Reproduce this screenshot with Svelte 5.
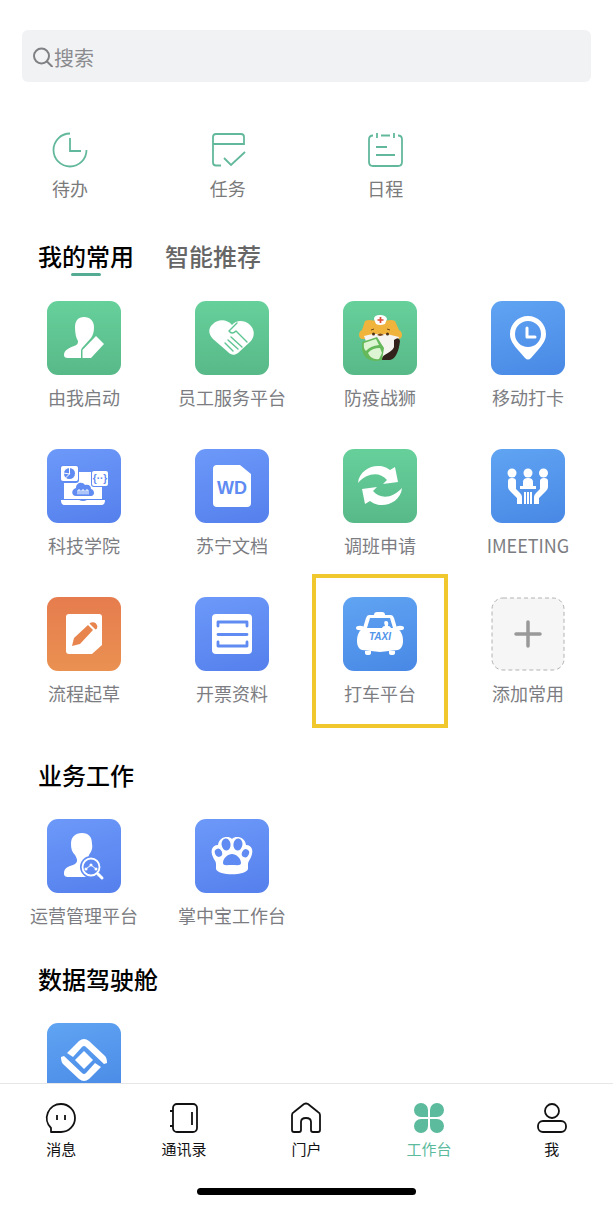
<script lang="ts">
	type App = { name: string, icon: string, color: string, marked?: boolean }

	const shortcuts = [
		{name: '待办', icon: 'todo'},
		{name: '任务', icon: 'task'},
		{name: '日程', icon: 'schedule'},
	]

	const tabs = ['我的常用', '智能推荐']
	let tab = $state(tabs[0])

	const common: App[] = [
		{name: '由我启动', icon: 'start', color: 'green'},
		{name: '员工服务平台', icon: 'heart', color: 'green'},
		{name: '防疫战狮', icon: 'lion', color: 'green'},
		{name: '移动打卡', icon: 'pin', color: 'blue'},
		{name: '科技学院', icon: 'laptop', color: 'indigo'},
		{name: '苏宁文档', icon: 'doc', color: 'indigo'},
		{name: '调班申请', icon: 'swap', color: 'green'},
		{name: 'IMEETING', icon: 'meeting', color: 'blue'},
		{name: '流程起草', icon: 'draft', color: 'orange'},
		{name: '开票资料', icon: 'invoice', color: 'indigo'},
		{name: '打车平台', icon: 'taxi', color: 'blue', marked: true},
		{name: '添加常用', icon: 'add', color: 'empty'},
	]

	const business: App[] = [
		{name: '运营管理平台', icon: 'operate', color: 'indigo'},
		{name: '掌中宝工作台', icon: 'paw', color: 'indigo'},
	]

	const cockpit: App[] = [
		{name: '', icon: 'diamond', color: 'blue'},
	]

	const pages = [
		{name: '消息', icon: 'message'},
		{name: '通讯录', icon: 'contacts'},
		{name: '门户', icon: 'home'},
		{name: '工作台', icon: 'work'},
		{name: '我', icon: 'me'},
	]
	let page = $state('工作台')
</script>

{#snippet glyph(icon: string)}
	<svg class="glyph" viewBox="0 0 74 74" fill="#fff" aria-hidden="true">
		{#if icon === 'start'}
			<path d="M28 26c0-6 3-10 9-10s10 4 10 10c0 5-1 8-3 11l-9 10-1 2v8H21c-3 0-4-1-4-3 0-5 5-7 10-9 3-1 4-2 4-5-2-3-3-8-3-14z"/>
			<path d="M49 35l8 8-13 14h-8.500v-8z"/>
		{:else if icon === 'heart'}
			<path d="M37 24c4-5 12-5 17-1 6 5 6 12 2 17L43 52c-4 3-7 2-10-1L18 38c-5-5-5-11 0-15 5-5 14-5 19 1z"/>
			<path class="cut" d="M42 22l-8 8q3 4 7 0l11 11M36 36l11 10M33 39l10 9M30 42l8 8" stroke-width="1.400"/>
		{:else if icon === 'lion'}
			<path d="M22 20c4-2 8 0 15 0s11-2 15 0l4 9c4 2 4 8 0 9H19c-4-1-4-7 0-9z" fill="#f0b43c"/>
			<path d="M21 35q16-5 35 1l-4 14-10 9-13-2z" fill="#f6f4f1"/>
			<path d="M51 39q5-4 6 1c-1 9-4 18-10 19h-9c2-7 11-7 13-13z" fill="#33211c"/>
			<circle cx="30.500" cy="33" r="1.500" fill="#4c3118"/>
			<circle cx="44.500" cy="33" r="1.500" fill="#4c3118"/>
			<path d="M28 29l3-1M44 28l3 1" stroke="#6d4717" stroke-width="1"/>
			<path d="M34 34q3-3 7 0l-4 1z" fill="#7b4519"/>
			<path d="M31 18q0-4 6-4t7 4l-2 5q-5 2-9 0z" fill="#fff"/>
			<path d="M37.500 16v6M34.500 19h6" stroke="#db4b3a" stroke-width="1.700"/>
			<path d="M19 41l15-5 7 11-2 12q-17 4-20-10z" fill="#65b95a"/>
			<path d="M21 42l12-4 3 6q-9 1-13 6-3-3-2-8zM25 52q4-5 12-5l2 5-3 6q-8 1-11-6z" fill="#def5d3"/>
		{:else if icon === 'pin'}
			<path fill-rule="evenodd" d="M37 15c10 0 18 8 18 18 0 7-4 11-8 16l-7 8q-3 3-6 0l-7-8c-4-5-8-9-8-16 0-10 8-18 18-18zm0 5a13 13 0 1 0 0 26 13 13 0 0 0 0-26z"/>
			<path class="line" d="M36 27v9h8" stroke-width="3"/>
		{:else if icon === 'laptop'}
			<path d="M17 23h38v27H17zM14 51h18q4 2 8 0h18c0 3-1 5-4 5H18c-3 0-4-2-4-5z"/>
			<rect class="cut" x="14" y="17" width="17" height="16" rx="2" stroke-width="2"/>
			<rect class="cut" x="45" y="22" width="16" height="15" rx="2" stroke-width="2"/>
			<rect x="14" y="17" width="17" height="15" rx="2"/>
			<rect x="45" y="22" width="16" height="15" rx="2"/>
			<g class="hole">
				<circle cx="22.500" cy="24.500" r="5.500"/>
				<path d="M29 47c-5 0-5-7 0-8 0-5 6-7 9-3 4-1 6 1 6 4 4 1 4 7 0 7z"/>
				<text x="53" y="32.500" font-size="10" font-weight="700" text-anchor="middle">{'{··}'}</text>
			</g>
			<path class="line" d="M22.500 19v6l-6-1M22.500 25l-4 4" stroke-width="1"/>
			<path class="line" d="M31 45v-4h2v4M35 45v-4h2v4M39 45v-4h2v4" stroke-width="1"/>
		{:else if icon === 'doc'}
			<path d="M22 16h23l11 9v29q0 4-4 4H22q-4 0-4-4V20q0-4 4-4z"/>
			<text class="hole" x="37" y="45" font-size="18" font-weight="700" text-anchor="middle">WD</text>
		{:else if icon === 'swap'}
			<path d="M15 34c1-11 11-17 20-17 6 0 9 2 12 4l5-3 3 15-15 2 4-4c-7-8-19-8-29 3z"/>
			<path transform="rotate(180 37 36.500)" d="M15 34c1-11 11-17 20-17 6 0 9 2 12 4l5-3 3 15-15 2 4-4c-7-8-19-8-29 3z"/>
		{:else if icon === 'meeting'}
			<circle cx="21" cy="24" r="4.500"/>
			<circle cx="37" cy="24" r="4.500"/>
			<circle cx="52.500" cy="24" r="4.500"/>
			<path d="M17 32q0-3 4-3t4 3v8l4 4q2 2 2 4v7h-5v-6l-7-7q-2-2-2-4zM57 32q0-3-4-3t-4 3v8l-4 4q-2 2-2 4v7h5v-6l7-7q2-2 2-4z"/>
			<path d="M32 37v-4q0-4 5-4t5 4v4h3v3H29v-3zM33 43h2v12h-2zM36 43h2v12h-2zM39 43h2v12h-2z"/>
		{:else if icon === 'draft'}
			<path d="M22 17h30q3 0 3 3v28l-10 9H22q-3 0-3-3V20q0-3 3-3z"/>
			<path class="hole" d="M25 49l2-8 14-13 5 5-13 14zM42.500 26.500l1.500-1q3-1 5 1t1 5l-1.500 1z"/>
		{:else if icon === 'invoice'}
			<rect x="17" y="17" width="40" height="40" rx="4"/>
			<path class="cut" d="M23 29v-4h29v4M23 37.500h29M23 45v4h29v-4" stroke-width="2.800"/>
		{:else if icon === 'taxi'}
			<path fill-rule="evenodd" d="M31 18q0-3 3-3h5q3 0 3 3h6q2 0 3 3l3 10c4 3 6 7 6 13 0 5-2 8-5 9l-18 2-18-2c-3-1-5-4-5-9 0-6 2-10 6-13l3-10q1-3 3-3zM27 21l-3 10h26l-3-10z"/>
			<ellipse cx="17" cy="31" rx="4" ry="2.200"/>
			<ellipse cx="57" cy="31" rx="4" ry="2.200"/>
			<path d="M22 54h6v2q0 2-3 2t-3-2zM46 54h6v2q0 2-3 2t-3-2zM39 32q0-3 3-3-2-5 1-5t2 5q3 0 3 3z"/>
			<text class="hole" x="37" y="43" font-size="10" font-weight="700" font-style="italic" text-anchor="middle">TAXI</text>
		{:else if icon === 'add'}
			<rect x="1" y="1" width="72" height="72" rx="11" fill="#f6f6f6" stroke="#b2b2b2" stroke-dasharray="4 3"/>
			<path d="M37 25v24M25 37h24" stroke="#999" stroke-width="3.500" stroke-linecap="round"/>
		{:else if icon === 'operate'}
			<path d="M24 25c0-7 4-11 11-11s10 4 10 11c1 5-1 8-3 11-2 6 0 8 4 9l6 12-14 1H22c-4 0-5-1-5-4 0-5 5-7 9-8 5-2 5-5 2-10-3-3-4-6-4-11z"/>
			<circle class="hole" cx="44" cy="48" r="11"/>
			<circle class="line" cx="44" cy="48" r="8.500" stroke-width="1.800"/>
			<path class="line" d="M39 50l5-4 5 4" stroke-width="1"/>
			<path class="line" d="M51 55l4 4" stroke-width="3"/>
			<circle cx="39" cy="50" r="1.500"/>
			<circle cx="44" cy="46" r="1.500"/>
			<circle cx="49" cy="50" r="1.500"/>
		{:else if icon === 'paw'}
			<path d="M23 26c1-8 10-10 14-6 4-4 13-2 14 6 6 0 8 6 5 12-1 3-3 4-3 8v4c-2 7-30 7-32 0v-5c0-3-2-4-3-7-3-6-1-12 5-12z"/>
			<g class="hole">
				<ellipse cx="31" cy="25.500" rx="4.500" ry="6" transform="rotate(-8 31 25)"/>
				<ellipse cx="43" cy="25.500" rx="4.500" ry="6" transform="rotate(8 43 25)"/>
				<ellipse cx="23.500" cy="34" rx="3.500" ry="4.200" transform="rotate(-25 23 34)"/>
				<ellipse cx="50.500" cy="34" rx="3.500" ry="4.200" transform="rotate(25 50 34)"/>
				<path d="M28 44c0-5 5-9 9-9s9 4 9 9c0 3-4 2-9 2s-9 1-9-2z"/>
			</g>
		{:else if icon === 'diamond'}
			<path d="M20 30l12-12q5-4 10 0l16 15q2 2 2 7l-3 1-18-17q-2-2-4 0L26 34z"/>
			<path transform="rotate(180 37 37)" d="M20 30l12-12q5-4 10 0l16 15q2 2 2 7l-3 1-18-17q-2-2-4 0L26 34z"/>
			<path d="M37 28l9 9-9 9-9-9z"/>
		{/if}
	</svg>
{/snippet}

{#snippet grid(apps: App[])}
	<div class="grid">
		{#each apps as app}
			<button class="app" class:marked={app.marked}>
				<span class="tile {app.color}">{@render glyph(app.icon)}</span>
				{#if app.name}<span class="name">{app.name}</span>{/if}
			</button>
		{/each}
	</div>
{/snippet}

<div class="screen">
	<main>
		<label class="search">
			<svg width="20" height="20" viewBox="0 0 20 20" fill="none" stroke="#808184" stroke-width="2" stroke-linecap="round" aria-hidden="true">
				<circle cx="8.500" cy="9" r="7.500"/>
				<path d="M14 14.500l5 5"/>
			</svg>
			<input type="search" placeholder="搜索">
		</label>

		<div class="shortcuts">
			{#each shortcuts as item}
				<button class="shortcut">
					<svg width="36" height="36" viewBox="0 0 36 36" fill="none" stroke="#62b89c" stroke-width="1.800" aria-hidden="true">
						{#if item.icon === 'todo'}
							<path d="M18 1.500A16.500 16.500 0 1 0 34.500 18"/>
							<path d="M18 6v13h11"/>
						{:else if item.icon === 'task'}
							<path d="M11 33.500H6q-3 0-3-3V5q0-3 3-3h25q3 0 3 3v8M3 12h31"/>
							<path d="M14 26l7 7 14-13"/>
						{:else}
							<path d="M6 3.500q-4 0-4 4V30q0 4 4 4h25q4 0 4-4V7.500q0-4-4-4M14 3.500h9"/>
							<path d="M10 1v5M27 1v5M9 15h11M9 23h19"/>
						{/if}
					</svg>
					<span>{item.name}</span>
				</button>
			{/each}
		</div>

		<div class="tabs">
			{#each tabs as name}
				<button class="tab" class:active={tab === name} onclick={() => tab = name}>{name}</button>
			{/each}
		</div>
		{@render grid(common)}

		<h2>业务工作</h2>
		{@render grid(business)}

		<h2>数据驾驶舱</h2>
		{@render grid(cockpit)}
	</main>

	<footer>
		<nav>
			{#each pages as item}
				<a href="#{item.icon}" class:current={page === item.name} onclick={() => page = item.name}>
					<svg width="32" height="32" viewBox="0 0 32 32" fill="none" stroke="currentColor" stroke-width="1.800" stroke-linejoin="round" aria-hidden="true">
						{#if item.icon === 'message'}
							<path d="M16 2a14 14 0 0 1 0 28H6v-4A14 14 0 0 1 16 2z"/>
							<path d="M12 13v5M20 13v5"/>
						{:else if item.icon === 'contacts'}
							<rect x="5" y="2" width="24" height="28" rx="4"/>
							<path d="M24 10v13M2 9h3M2 24h3"/>
						{:else if item.icon === 'home'}
							<path d="M2 13q0-2 2-3l10-8q2-1 4 0l10 8q2 1 2 3v15q0 2-2 2h-5q-2 0-2-2v-8q0-4-5-4t-5 4v8q0 2-2 2H4q-2 0-2-2z"/>
						{:else if item.icon === 'work'}
							<path fill="currentColor" stroke="none" d="M15 15H8a7 7 0 1 1 7-7zM17 15V8a7 7 0 1 1 7 7zM15 17v7a7 7 0 1 1-7-7zM17 17h7a7 7 0 1 1-7 7z"/>
						{:else}
							<circle cx="16" cy="9" r="7"/>
							<rect x="2" y="19" width="28" height="11" rx="5"/>
						{/if}
					</svg>
					<span>{item.name}</span>
				</a>
			{/each}
		</nav>
		<div class="indicator"></div>
	</footer>
</div>

<style>
	:global(body) {
		background: #fff;
	}

	.screen {
		display: flex;
		flex-direction: column;
		height: 100vh;
		font-family: "Noto Sans CJK SC", sans-serif;
		color: #000;
	}

	button {
		padding: 0;
		border: 0;
		background: none;
		font-family: inherit;
		color: inherit;
		cursor: pointer;
	}

	svg {
		display: block;
	}

	main {
		flex: 1;
		min-height: 0;
		overflow-y: auto;
		scrollbar-width: none;
	}

	.search {
		display: flex;
		align-items: center;
		gap: 1px;
		height: 52px;
		margin: 30px 22px 0;
		padding: 2px 11px 0;
		box-sizing: border-box;
		border-radius: 6px;
		background: #f1f2f4;
	}

	.search input {
		flex: 1;
		min-width: 0;
		height: 32px;
		padding: 0;
		border: 0;
		outline: none;
		background: none;
		font-family: inherit;
		font-size: 20px;
	}

	.search input::placeholder {
		color: #8a8b8e;
	}

	.shortcuts {
		display: grid;
		grid-template-columns: repeat(4, 72px);
		justify-content: space-between;
		margin-top: 50px;
		padding: 0 34px;
	}

	.shortcut {
		display: flex;
		flex-direction: column;
		align-items: center;
		gap: 8px;
		font-size: 18px;
		line-height: 24px;
		color: #7a7a7a;
	}

	.tabs {
		display: flex;
		gap: 31px;
		margin: 40px 38px 29px;
	}

	.tab {
		position: relative;
		font-size: 24px;
		line-height: 32px;
		font-weight: 500;
		color: #666;
	}

	.tab.active {
		color: #000;
	}

	.tab.active::after {
		content: "";
		position: absolute;
		bottom: -4px;
		left: 50%;
		width: 30px;
		height: 3px;
		margin-left: -15px;
		border-radius: 2px;
		background: #52ab92;
	}

	.grid {
		display: grid;
		grid-template-columns: repeat(4, 1fr);
		row-gap: 40px;
		padding: 0 11px 0 10px;
	}

	.app {
		position: relative;
		display: flex;
		flex-direction: column;
		align-items: center;
		gap: 10px;
	}

	.marked::after {
		content: "";
		position: absolute;
		inset: -23px 6px;
		border: 4px solid #f0c82d;
	}

	.name {
		font-size: 18px;
		line-height: 24px;
		white-space: nowrap;
		color: #7c7d82;
	}

	.tile {
		width: 74px;
		height: 74px;
		border-radius: 11px;
	}

	.green {
		--tone: #5ec492;
		background: linear-gradient(#66d09b, #58b988);
	}

	.blue {
		--tone: #5294ea;
		background: linear-gradient(165deg, #60a4f3, #4888e5);
	}

	.indigo {
		--tone: #5f8bf2;
		background: linear-gradient(165deg, #6c99f9, #5580ed);
	}

	.orange {
		--tone: #e8854f;
		background: linear-gradient(#e67c4e, #ea9152);
	}

	.glyph {
		width: 100%;
		height: 100%;
		font-family: "Liberation Sans", "Noto Sans CJK SC", sans-serif;
	}

	.hole {
		fill: var(--tone);
	}

	.cut {
		fill: none;
		stroke: var(--tone);
		stroke-linecap: round;
		stroke-linejoin: round;
	}

	.line {
		fill: none;
		stroke: #fff;
		stroke-linecap: round;
		stroke-linejoin: round;
	}

	h2 {
		margin: 54px 38px 28px;
		font-size: 24px;
		line-height: 32px;
		font-weight: 500;
	}

	.grid + h2 ~ h2 {
		margin-top: 36px;
	}

	footer {
		padding-bottom: 12px;
		border-top: 1px solid #e6e6e6;
		background: #fff;
	}

	nav {
		display: grid;
		grid-template-columns: repeat(5, 1fr);
		padding-top: 18px;
	}

	nav a {
		display: flex;
		flex-direction: column;
		align-items: center;
		gap: 5px;
		font-size: 15px;
		line-height: 20px;
		color: #111;
		text-decoration: none;
	}

	nav .current {
		color: #5cba9d;
	}

	.indicator {
		width: 219px;
		height: 7px;
		margin: 29px auto 0;
		border-radius: 4px;
		background: #000;
	}
</style>
